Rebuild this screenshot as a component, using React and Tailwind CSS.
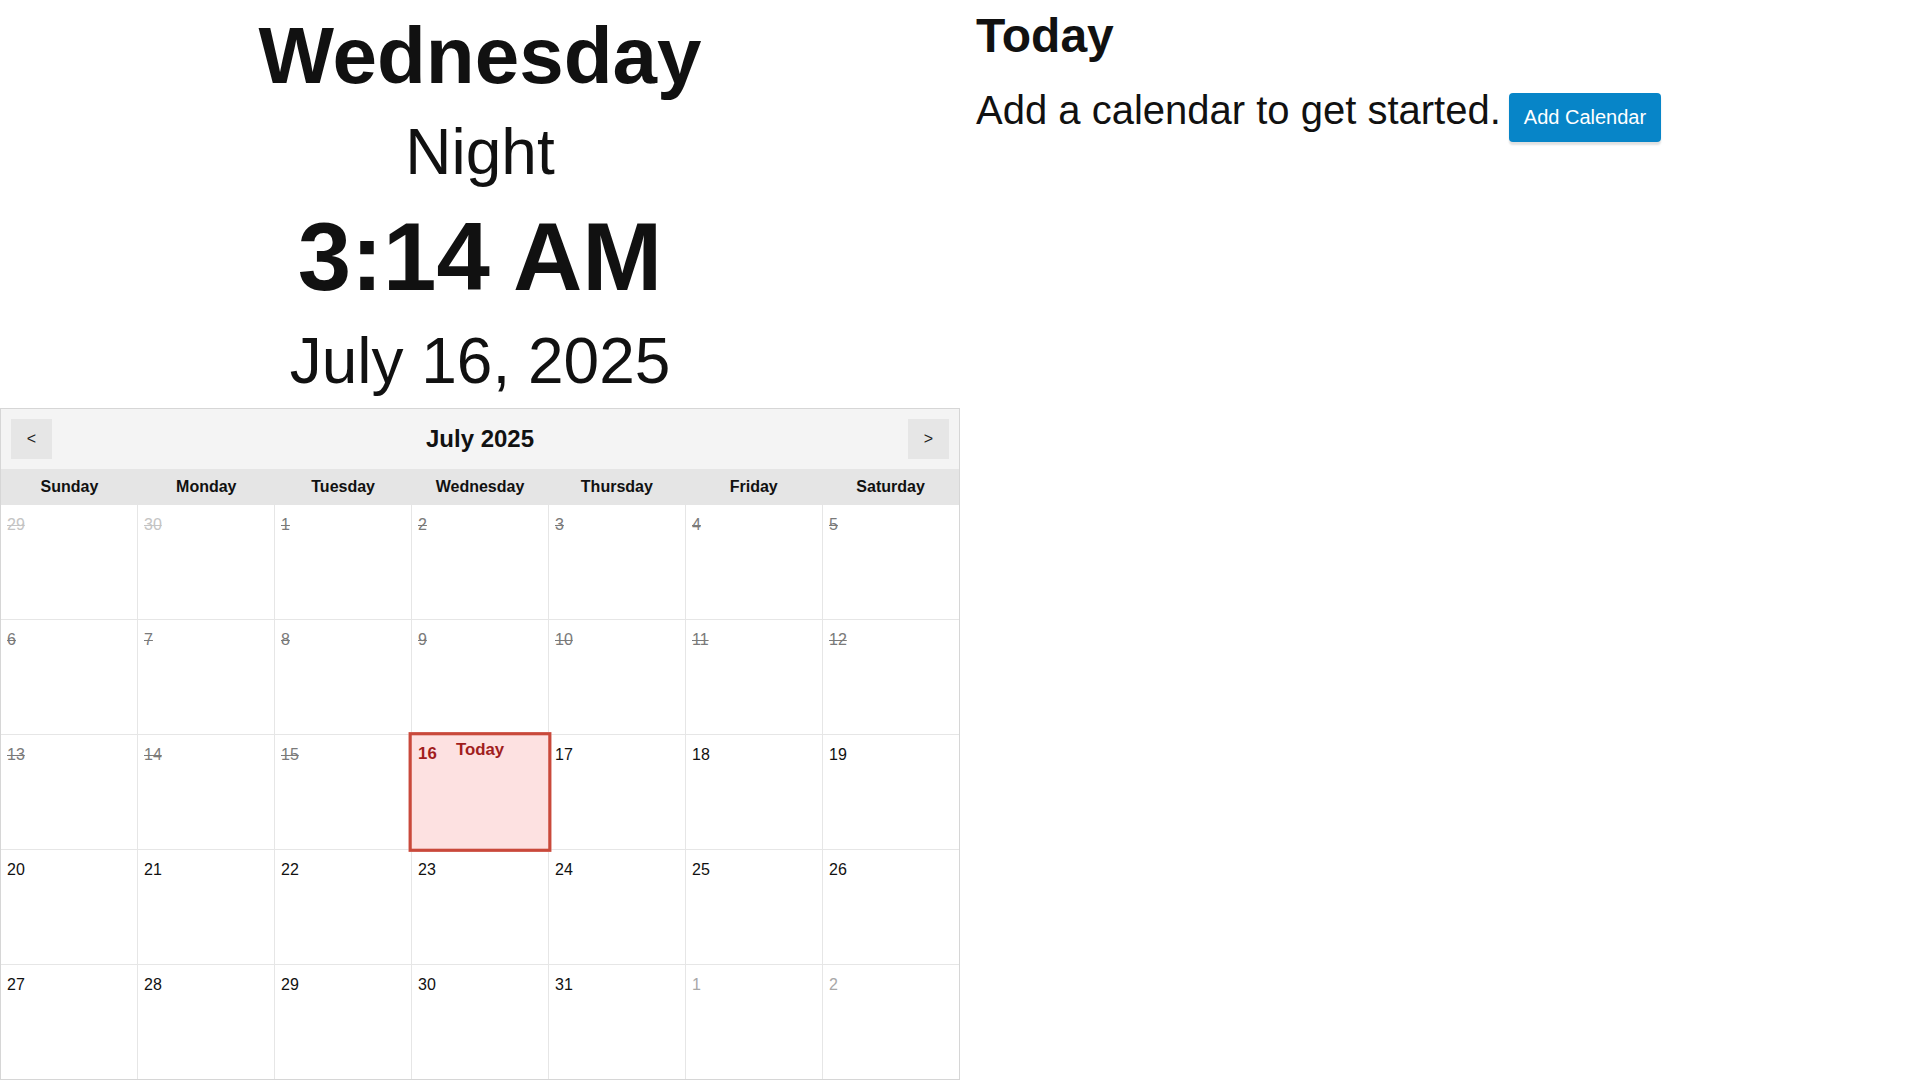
import React from 'react';

const WEEKDAYS = ['Sunday', 'Monday', 'Tuesday', 'Wednesday', 'Thursday', 'Friday', 'Saturday'];

// July 2025 grid, starts on Sunday June 29
const buildDays = () => {
  const days = [
    { n: 29, kind: 'prev' },
    { n: 30, kind: 'prev' },
  ];
  for (let d = 1; d <= 31; d++) {
    days.push({ n: d, kind: d < 16 ? 'past' : d === 16 ? 'today' : 'future' });
  }
  days.push({ n: 1, kind: 'next' }, { n: 2, kind: 'next' });
  return days;
};

function DayCell({ day }) {
  if (day.kind === 'today') {
    return (
      <div className="relative z-10 scale-[1.05] border-[3px] border-[#c9493b] bg-[#fde1e1] px-[6px] pt-[6px]">
        <span className="absolute left-0 right-0 top-[2px] text-center text-[16px] font-bold text-[#a11d1d]">
          Today
        </span>
        <span className="text-[16px] leading-6 font-bold text-[#a11d1d]">{day.n}</span>
      </div>
    );
  }

  const color = {
    prev: 'text-[#c4c4c4] line-through',
    past: 'text-[#7a7a7a] line-through',
    next: 'text-[#a8a8a8]',
    future: 'text-[#111]',
  }[day.kind];

  return (
    <div className="bg-white px-[6px] pt-[8px]">
      <span className={`text-[16px] leading-6 ${color}`}>{day.n}</span>
    </div>
  );
}

function Calendar() {
  const days = buildDays();

  return (
    <div className="mt-[15px] border border-[#d6d6d6]">
      <div className="flex h-[60px] items-center justify-between bg-[#f4f4f4] px-[10px]">
        <button className="flex h-10 w-[41px] items-center justify-center bg-[#e6e6e6] text-[16px] text-[#222]">
          &lt;
        </button>
        <h2 className="text-[24px] font-bold text-[#111]">July 2025</h2>
        <button className="flex h-10 w-[41px] items-center justify-center bg-[#e6e6e6] text-[16px] text-[#222]">
          &gt;
        </button>
      </div>

      <div className="grid h-[36px] grid-cols-7 items-center bg-[#e5e5e5]">
        {WEEKDAYS.map((d) => (
          <div key={d} className="text-center text-[16px] font-bold text-[#111]">
            {d}
          </div>
        ))}
      </div>

      <div className="grid h-[574px] grid-cols-7 grid-rows-5 gap-px bg-[#e6e6e6]">
        {days.map((day, i) => (
          <DayCell key={i} day={day} />
        ))}
      </div>
    </div>
  );
}

export default function App() {
  return (
    <div className="flex min-h-screen bg-white font-['Liberation_Sans',Arial,sans-serif] text-[#111]">
      <div className="w-1/2">
        <div className="flex flex-col items-center pt-[16px]">
          <h1 className="text-[80px] leading-[80px] font-bold">Wednesday</h1>
          <div className="mt-[24px] text-[64px] leading-[64px]">Night</div>
          <div className="mt-[25px] text-[96px] leading-[96px] font-bold">3:14 AM</div>
          <div className="mt-[24px] text-[64px] leading-[64px]">July 16, 2025</div>
        </div>
        <Calendar />
      </div>

      <div className="flex-1 pl-[16px] pt-[12px]">
        <h2 className="text-[48px] leading-[48px] font-bold">Today</h2>
        <div className="mt-[30px] text-[40px] leading-none">
          Add a calendar to get started.
          <button className="ml-2 inline-block rounded bg-[#0785c8] px-[15px] py-[12px] align-baseline text-[20px] leading-[25px] text-white shadow-[0_3px_2px_rgba(0,0,0,0.12)]">
            Add Calendar
          </button>
        </div>
      </div>
    </div>
  );
}
